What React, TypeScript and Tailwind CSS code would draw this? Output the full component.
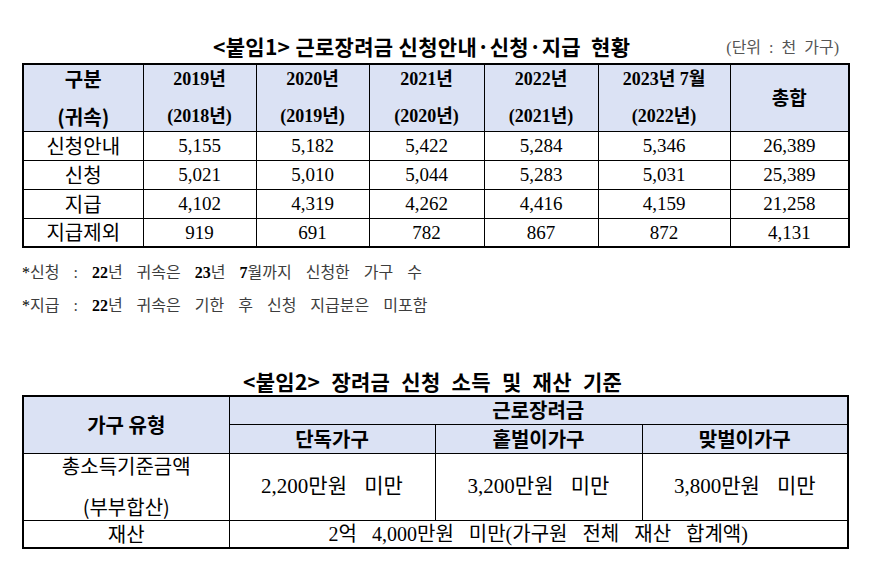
import React from "react";

const F = "font-['Liberation_Serif','Noto_Sans_CJK_KR',serif]";
const K = "font-['Noto_Sans_CJK_KR','Noto_Sans',sans-serif]";

const rows = [
  ["신청안내", "5,155", "5,182", "5,422", "5,284", "5,346", "26,389"],
  ["신청", "5,021", "5,010", "5,044", "5,283", "5,031", "25,389"],
  ["지급", "4,102", "4,319", "4,262", "4,416", "4,159", "21,258"],
  ["지급제외", "919", "691", "782", "867", "872", "4,131"],
];

const years = [
  ["2019년", "(2018년)"],
  ["2020년", "(2019년)"],
  ["2021년", "(2020년)"],
  ["2022년", "(2021년)"],
  ["2023년 7월", "(2022년)"],
];

const cell = "border border-black p-0 text-center align-middle";

export default function App() {
  return (
    <div className={`w-[871px] h-[569px] bg-white text-black ${F}`}>
      <div className="pl-[22px] pt-[34px] flex flex-col">
        <div className="flex items-end h-[24px] w-[826px]">
          <span className={`ml-[191px] text-[21px] leading-[24px] font-bold ${K} tracking-[0.3px]`}>
            &lt;붙임1&gt; 근로장려금 신청안내·신청·지급&nbsp; 현황
          </span>
          <span className={`ml-auto mr-[9px] text-[16px] leading-[20px] text-[#555] ${F} [word-spacing:4px]`}>
            (단위 : 천 가구)
          </span>
        </div>

        <table className="mt-[5px] table-fixed border-collapse border-2 border-black w-[826px]">
          <colgroup>
            <col className="w-[120px]" />
            <col className="w-[113px]" />
            <col className="w-[113px]" />
            <col className="w-[115px]" />
            <col className="w-[114px]" />
            <col className="w-[132px]" />
            <col className="w-[119px]" />
          </colgroup>
          <thead>
            <tr className="h-[67px] bg-[#dbe2f4]">
              <th className={cell}>
                <div className={`flex flex-col items-center gap-[18px] leading-none text-[20px] font-bold ${K}`}>
                  <span>구분</span>
                  <span>(귀속)</span>
                </div>
              </th>
              {years.map((y) => (
                <th key={y[0]} className={cell}>
                  <div className="flex flex-col items-center gap-[19px] leading-none text-[18px] font-bold">
                    <span>{y[0]}</span>
                    <span>{y[1]}</span>
                  </div>
                </th>
              ))}
              <th className={cell}>
                <span className={`text-[19px] font-bold ${K}`}>총합</span>
              </th>
            </tr>
          </thead>
          <tbody>
            {rows.map((r) => (
              <tr key={r[0]} className="h-[29px]">
                <td className={`${cell} text-[20px] leading-none ${K}`}>{r[0]}</td>
                {r.slice(1).map((v, i) => (
                  <td key={i} className={`${cell} text-[19px] leading-none`}>
                    {v}
                  </td>
                ))}
              </tr>
            ))}
          </tbody>
        </table>

        <div className="mt-[15px] text-[16px] leading-[20px] text-[#3d3d3d] [word-spacing:10px]">
          <span className="text-black">*</span>신청 : <b className="text-black">22</b>년 귀속은 <b className="text-black">23</b>년 <b className="text-black">7</b>월까지 신청한 가구 수
        </div>
        <div className="mt-[13px] text-[16px] leading-[20px] text-[#3d3d3d] [word-spacing:10px]">
          <span className="text-black">*</span>지급 : <b className="text-black">22</b>년 귀속은 기한 후 신청 지급분은 미포함
        </div>

        <div className="mt-[53px] h-[24px] flex">
          <span className={`ml-[221px] text-[21px] leading-[24px] font-bold ${K} tracking-[0.3px] [word-spacing:6px]`}>
            &lt;붙임2&gt; 장려금 신청 소득 및 재산 기준
          </span>
        </div>

        <table className="mt-[2px] table-fixed border-collapse border-2 border-black w-[825px]">
          <colgroup>
            <col className="w-[206px]" />
            <col className="w-[206px]" />
            <col className="w-[207px]" />
            <col className="w-[206px]" />
          </colgroup>
          <tbody>
            <tr className="h-[28px] bg-[#dbe2f4]">
              <td rowSpan={2} className={`${cell} text-[20px] font-bold ${K}`}>가구 유형</td>
              <td colSpan={3} className={`${cell} text-[20px] leading-none font-bold ${K}`}>근로장려금</td>
            </tr>
            <tr className="h-[29px] bg-[#dbe2f4]">
              <td className={`${cell} text-[20px] leading-none font-bold ${K}`}>단독가구</td>
              <td className={`${cell} text-[20px] leading-none font-bold ${K}`}>홑벌이가구</td>
              <td className={`${cell} text-[20px] leading-none font-bold ${K}`}>맞벌이가구</td>
            </tr>
            <tr className="h-[67px]">
              <td className={cell}>
                <div className={`flex flex-col items-center gap-[21px] leading-none text-[20px] ${K}`}>
                  <span>총소득기준금액</span>
                  <span>(부부합산)</span>
                </div>
              </td>
              <td className={`${cell} text-[21px] leading-none [word-spacing:12px]`}>2,200만원 미만</td>
              <td className={`${cell} text-[21px] leading-none [word-spacing:12px]`}>3,200만원 미만</td>
              <td className={`${cell} text-[21px] leading-none [word-spacing:12px]`}>3,800만원 미만</td>
            </tr>
            <tr className="h-[28px]">
              <td className={`${cell} text-[20px] leading-none ${K}`}>재산</td>
              <td colSpan={3} className={`${cell} text-[20px] leading-none [word-spacing:10px]`}>
                2억 4,000만원 미만(가구원 전체 재산 합계액)
              </td>
            </tr>
          </tbody>
        </table>
      </div>
    </div>
  );
}
